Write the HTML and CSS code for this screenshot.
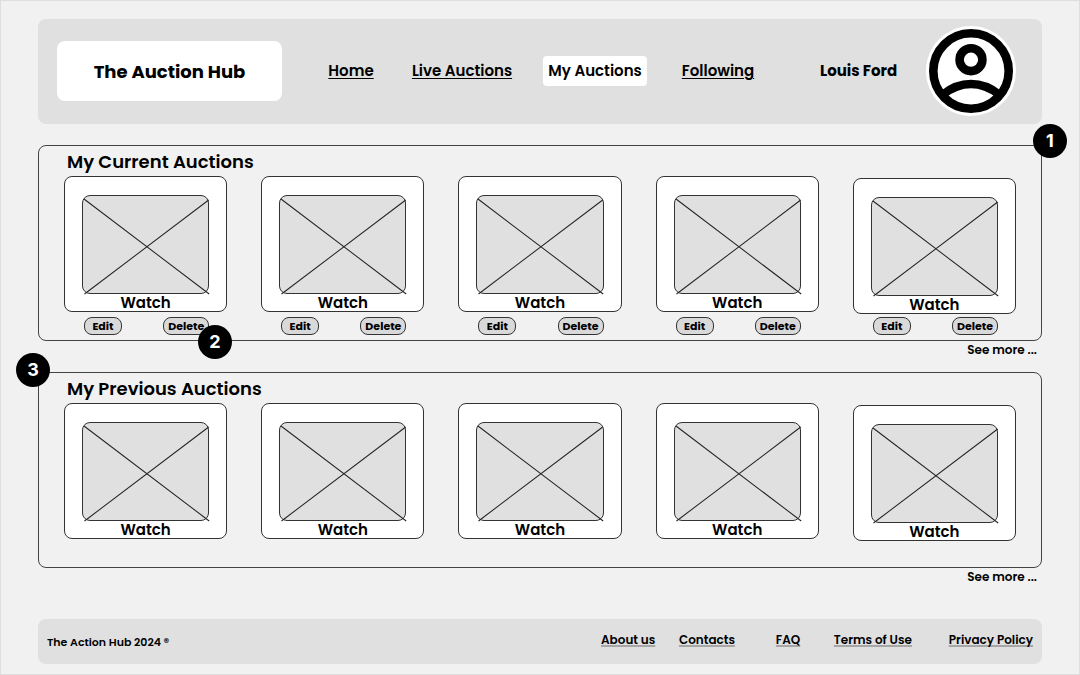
FILE: index.html
```html
<!DOCTYPE html>
<html lang="en">
<head>
<meta charset="utf-8">
<meta name="viewport" content="width=device-width, initial-scale=1">
<title>The Auction Hub - My Auctions</title>
<link rel="stylesheet" href="styles.css">
</head>
<body>
<svg class="defs" aria-hidden="true">
  <symbol id="cross" viewBox="0 0 125 97" preserveAspectRatio="none" overflow="visible">
    <path d="M1 3 126 98M1.500 98 125.500 4" fill="none" stroke="#222" stroke-width="1"/>
  </symbol>
</svg>
<div class="page">
  <header class="header">
    <h1 class="brand">The Auction Hub</h1>
    <nav class="nav" aria-label="Main">
      <a class="nav-link" href="#home">Home</a>
      <a class="nav-link" href="#live">Live Auctions</a>
      <a class="nav-link nav-link--active" href="#mine" aria-current="page">My Auctions</a>
      <a class="nav-link" href="#following">Following</a>
    </nav>
    <div class="user">
      <span class="user-name">Louis Ford</span>
      <svg class="avatar" viewBox="0 0 90 90" role="img" aria-label="Profile">
        <circle cx="45" cy="45" r="45" fill="#fff"/>
        <g fill="none" stroke="#000" stroke-width="8.600">
          <circle cx="45" cy="45" r="37.700"/>
          <circle cx="45" cy="33.700" r="11.400"/>
          <path d="M17 68.500Q30 58 45 58T73 68.500"/>
        </g>
      </svg>
    </div>
  </header>

  <main>
    <section class="panel">
      <span class="badge badge--right">1</span>
      <span class="badge badge--card">2</span>
      <h2 class="panel-title">My Current Auctions</h2>
      <div class="auctions">
        <article class="auction">
          <div class="card"><div class="thumb"><svg class="cross"><use href="#cross"/></svg></div><span class="label">Watch</span></div>
          <div class="actions"><button class="action">Edit</button><button class="action action--wide">Delete</button></div>
        </article>
        <article class="auction">
          <div class="card"><div class="thumb"><svg class="cross"><use href="#cross"/></svg></div><span class="label">Watch</span></div>
          <div class="actions"><button class="action">Edit</button><button class="action action--wide">Delete</button></div>
        </article>
        <article class="auction">
          <div class="card"><div class="thumb"><svg class="cross"><use href="#cross"/></svg></div><span class="label">Watch</span></div>
          <div class="actions"><button class="action">Edit</button><button class="action action--wide">Delete</button></div>
        </article>
        <article class="auction">
          <div class="card"><div class="thumb"><svg class="cross"><use href="#cross"/></svg></div><span class="label">Watch</span></div>
          <div class="actions"><button class="action">Edit</button><button class="action action--wide">Delete</button></div>
        </article>
        <article class="auction auction--low">
          <div class="card"><div class="thumb"><svg class="cross"><use href="#cross"/></svg></div><span class="label">Watch</span></div>
          <div class="actions"><button class="action">Edit</button><button class="action action--wide">Delete</button></div>
        </article>
      </div>
    </section>
    <a class="more" href="#current">See more ...</a>

    <section class="panel panel--previous">
      <span class="badge badge--left">3</span>
      <h2 class="panel-title">My Previous Auctions</h2>
      <div class="auctions">
        <article class="auction">
          <div class="card"><div class="thumb"><svg class="cross"><use href="#cross"/></svg></div><span class="label">Watch</span></div>
        </article>
        <article class="auction">
          <div class="card"><div class="thumb"><svg class="cross"><use href="#cross"/></svg></div><span class="label">Watch</span></div>
        </article>
        <article class="auction">
          <div class="card"><div class="thumb"><svg class="cross"><use href="#cross"/></svg></div><span class="label">Watch</span></div>
        </article>
        <article class="auction">
          <div class="card"><div class="thumb"><svg class="cross"><use href="#cross"/></svg></div><span class="label">Watch</span></div>
        </article>
        <article class="auction auction--low">
          <div class="card"><div class="thumb"><svg class="cross"><use href="#cross"/></svg></div><span class="label">Watch</span></div>
        </article>
      </div>
    </section>
    <a class="more" href="#previous">See more ...</a>
  </main>

  <footer class="footer">
    <p class="copyright">The Action Hub 2024 ®</p>
    <nav class="footer-nav" aria-label="Footer">
      <a class="footer-link" href="#about">About us</a>
      <a class="footer-link" href="#contacts">Contacts</a>
      <a class="footer-link" href="#faq">FAQ</a>
      <a class="footer-link" href="#terms">Terms of Use</a>
      <a class="footer-link" href="#privacy">Privacy Policy</a>
    </nav>
  </footer>
</div>
</body>
</html>
```
FILE: styles.css
```css
* {
  box-sizing: border-box;
}

body {
  margin: 0;
  background: #f1f1f1;
  color: #000;
  font-family: Poppins, Inter, "Open Sans", sans-serif;
  font-weight: 600;
}

a {
  color: inherit;
}

.defs {
  display: none;
}

.page {
  min-height: 100vh;
  padding: 18px 37px 10px;
  border: 1px solid #dedede;
}

.header {
  display: flex;
  align-items: center;
  padding: 7px 26px 8px 19px;
  margin-bottom: 21px;
  border-radius: 8px;
  background: #e0e0e0;
}

.brand {
  flex: 0 0 225px;
  margin: 0;
  padding-top: 2px;
  border-radius: 8px;
  background: #fff;
  font-size: 18px;
  font-weight: 700;
  line-height: 58px;
  text-align: center;
}

.nav {
  display: grid;
  flex: 1;
  grid-template-columns: 78fr 144fr 122fr 124fr;
  justify-items: center;
  margin-left: 30px;
  font-size: 15px;
  line-height: 30px;
  white-space: nowrap;
}

.nav-link {
  text-underline-offset: 2px;
  text-decoration-thickness: 1px;
}

.nav-link--active {
  padding: 0 5px;
  border-radius: 4px;
  background: #fff;
  text-decoration: none;
}

.user {
  display: flex;
  flex: 0 0 196px;
  align-items: center;
  justify-content: space-between;
  margin-left: 40px;
}

.user-name {
  padding-bottom: 2px;
  font-size: 15px;
  font-weight: 700;
  white-space: nowrap;
}

.avatar {
  width: 90px;
  height: 90px;
}

.panel {
  position: relative;
  padding: 0 25px 5px;
  border: 1px solid #444;
  border-radius: 8px;
}

.panel--previous {
  padding-bottom: 26px;
}

.panel-title {
  margin: 0 3px;
  padding-top: 2px;
  font-size: 18px;
  font-weight: 600;
  line-height: 28px;
}

.auctions {
  display: grid;
  grid-template-columns: repeat(5, 1fr);
  gap: 34px;
}

.card {
  padding: 18px 17px 0;
  border: 1px solid #333;
  border-radius: 8px;
  background: #fff;
  text-align: center;
}

.auction--low .card {
  margin-top: 2px;
}

.thumb {
  height: 99px;
  border: 1px solid #333;
  border-radius: 8px;
  background: #e0e0e0;
}

.cross {
  display: block;
  width: 100%;
  height: 100%;
  overflow: visible;
}

.label {
  display: block;
  font-size: 15px;
  line-height: 17px;
}

.actions {
  display: flex;
  justify-content: space-between;
  margin-top: 5px;
  padding: 0 18px 0 20px;
}

.auction--low .actions {
  margin-top: 3px;
}

.action {
  width: 38px;
  height: 18px;
  padding: 1px 0 0;
  border: 1px solid #333;
  border-radius: 8px;
  background: #d9d9d9;
  color: #000;
  font-family: inherit;
  font-size: 11px;
  font-weight: 700;
  line-height: 15px;
}

.action--wide {
  width: 46px;
}

.badge {
  position: absolute;
  z-index: 1;
  width: 34px;
  height: 34px;
  border-radius: 50%;
  background: #000;
  color: #fff;
  font-family: Inter, sans-serif;
  font-size: 18px;
  font-weight: 700;
  line-height: 34px;
  text-align: center;
}

.badge--right {
  top: -22px;
  right: -26px;
}

.badge--card {
  bottom: -19px;
  left: 159px;
}

.badge--left {
  top: -20px;
  left: -23px;
}

.more {
  display: block;
  width: fit-content;
  margin: 0 5px 13px auto;
  font-size: 12px;
  line-height: 18px;
  text-decoration: none;
}

.footer {
  display: flex;
  justify-content: space-between;
  margin-top: 33px;
  padding: 12px 9px;
  border-radius: 8px;
  background: #e0e0e0;
  white-space: nowrap;
}

.copyright {
  margin: 2px 0 0;
  font-size: 11px;
  line-height: 19px;
}

.footer-nav {
  display: grid;
  flex: 0 0 432px;
  grid-template-columns: 78fr 97fr 58fr 115fr 84fr;
  font-size: 12px;
  line-height: 18px;
}

.footer-link {
  text-decoration-color: #a6a6a6;
  text-decoration-thickness: 2px;
  text-decoration-skip-ink: none;
  text-underline-offset: 1px;
}
```
